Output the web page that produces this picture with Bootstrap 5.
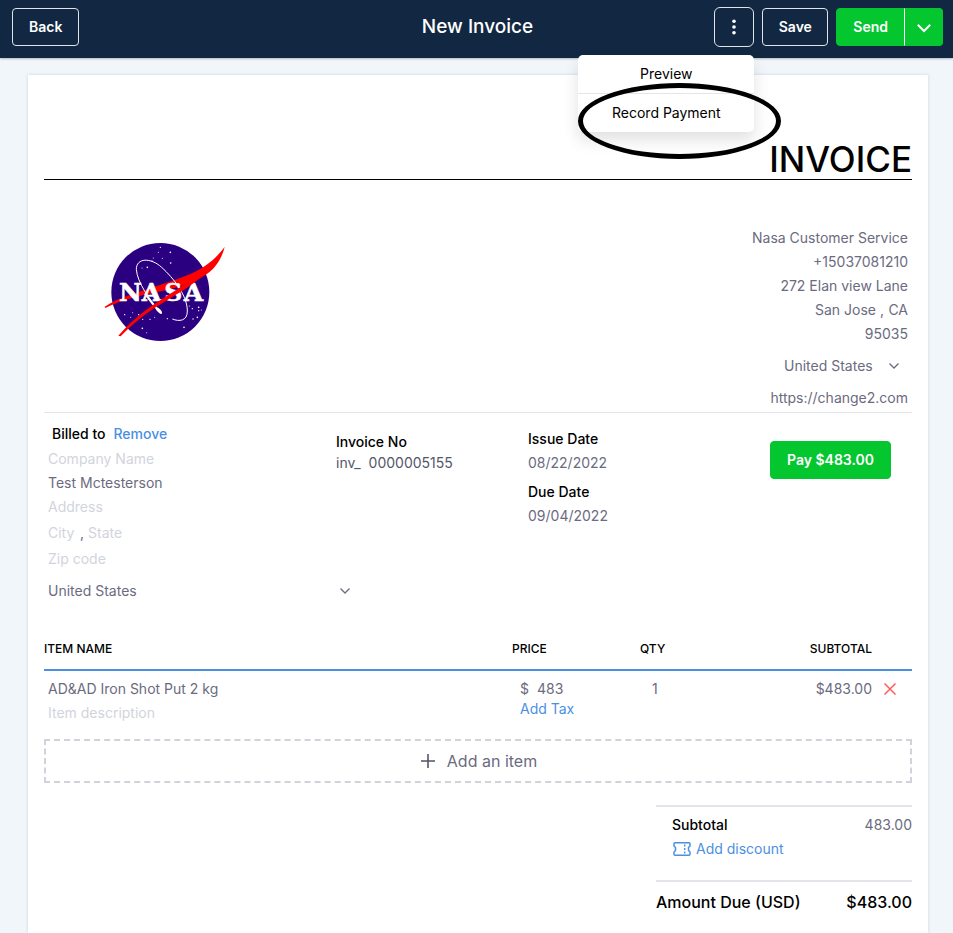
<!DOCTYPE html>
<html lang="en">
<head>
<meta charset="utf-8">
<meta name="viewport" content="width=device-width, initial-scale=1">
<title>New Invoice</title>
<link href="https://cdn.jsdelivr.net/npm/bootstrap@5.3.0/dist/css/bootstrap.min.css" rel="stylesheet">
<style>
  :root { --navy: #122842; --green: #04c62f; --blue: #4a90e2; --ink: #6b6b80; --faint: #d2d4dc; --rule: #e4e5ea; }
  body { font-family: Inter, "Liberation Sans", sans-serif; font-size: 14px; line-height: 24px; color: var(--ink); background: #f1f6fa; }
  a { color: var(--blue); text-decoration: none; }

  .topbar { background: var(--navy); padding: 7px 10px 11px 12px; display: grid; grid-template-columns: 1fr auto 1fr; box-shadow: 0 1px 2px rgba(0,0,0,.25); }
  .topbar-title { font-size: 19px; line-height: 40px; font-weight: 500; color: #fff; }
  .btn-bar { font-size: 14px; line-height: 24px; font-weight: 600; padding: 6px 16px; border-radius: 4px; color: #fff; border: 1px solid #dfe3e8; }
  .btn-bar:hover, .btn-bar.show { color: #fff; border-color: #dfe3e8; }
  .btn-kebab { width: 40px; height: 40px; padding: 0; border-radius: 6px; }
  .btn-go { background: var(--green); border-color: var(--green); }
  .btn-go:hover { background: #03b32a; border-color: #03b32a; }
  .btn-caret { width: 39px; padding: 0; border-left-color: #fff; }
  .btn-save { width: 66px; padding-left: 0; padding-right: 0; }

  .more-menu { top: 48px; right: 0; width: 176px; min-width: 0; padding: 0; border: 0; border-radius: 5px; box-shadow: 0 8px 16px rgba(0,0,0,.12); }
  .more-menu .dropdown-item { font-size: 14px; line-height: 22px; padding: 8px; text-align: center; color: #000; }
  .more-menu .divided { border-top: 1px solid var(--rule); }
  .callout-ring { position: absolute; left: 0; top: 28px; width: 203px; height: 76px; border: 5px solid #000; border-radius: 50%; pointer-events: none; }

  .page-wrap { padding: 17px 25px 0 28px; }
  .sheet { background: #fff; padding: 64px 16px 16px; box-shadow: 0 0 3px rgba(40,70,100,.2); }
  .sheet-title { font-size: 35px; line-height: 40px; font-weight: 500; color: #000; border-bottom: 1px solid #000; }

  .field { display: block; width: 100%; min-width: 0; height: 24px; padding: 0 4px; border: 0; background: transparent; color: var(--ink); font-size: 14px; line-height: 24px; }
  .field::placeholder { color: var(--faint); opacity: 1; }
  .pick { height: 40px; appearance: none; background: transparent url("data:image/svg+xml,%3Csvg xmlns='http://www.w3.org/2000/svg' width='12' height='8' fill='none' stroke='%236b6b80' stroke-width='1.3'%3E%3Cpath d='M1.5 1.5 6 6l4.5-4.5'/%3E%3C/svg%3E") no-repeat right 12px center; }
  .w-state { width: 28px; }
  .w-city { width: 36px; }
  .sender { width: 200px; }
  .sender-country { width: 132px; }

  .parties { padding-top: 46px; padding-bottom: 2px; border-bottom: 1px solid var(--rule); }
  .logo { margin: 4px 0 0 46px; }
  .details { display: grid; grid-template-columns: 292fr 192fr 384fr; padding-top: 9px; }
  .caption { color: #000; font-weight: 500; }
  .bill-head { padding: 0 8px 1px; font-weight: 500; }
  .city-line { padding: 2px 0; }
  .recipient { grid-column: 1 / 3; }
  .recipient .pick { width: 66%; }
  .invoice-no { padding-top: 9px; line-height: 21px; color: #54566a; }
  .dates { padding-top: 5px; }
  .dates dd { margin-bottom: 5px; }
  .btn-pay { margin: 19px 21px 0 0; }

  .items { table-layout: fixed; width: 100%; margin-top: 30px; }
  .items th { font-size: 12px; line-height: 16px; font-weight: 500; color: #000; padding: 0 0 12px; border-bottom: 2px solid var(--blue); }
  .items td { padding: 6px 0 14px; vertical-align: top; }
  .col-128 { width: 128px; }
  .col-104 { width: 104px; }
  .col-40 { width: 40px; }
  .qty { padding-left: 12px; }
  .tax { display: block; line-height: 16px; padding-left: 8px; }
  .remove-item { height: 24px; padding: 0 12px; border: 0; }
  .btn-add { border: 2px dashed #d0d3da; font-size: 16px; line-height: 24px; padding: 8px; color: var(--ink); border-radius: 0; }

  .totals { width: 256px; margin-top: 22px; }
  .totals-lines { border-top: 2px solid var(--rule); border-bottom: 2px solid var(--rule); padding: 6px 0 19px 16px; }
  .amount { font-size: 16px; font-weight: 500; color: #000; padding-top: 8px; }
</style>
</head>
<body class="d-flex flex-column min-vh-100">

<header class="topbar align-items-center">
  <div><button type="button" class="btn btn-bar">Back</button></div>
  <div class="topbar-title">New Invoice</div>
  <div class="d-flex justify-content-end align-items-center gap-2">
    <div class="dropdown">
      <button type="button" class="btn btn-bar btn-kebab d-flex align-items-center justify-content-center" aria-label="More actions" aria-expanded="true">
        <svg width="4" height="16" viewBox="0 0 4 16" fill="#fff" aria-hidden="true"><circle cx="2" cy="2.2" r="1.8"/><circle cx="2" cy="8" r="1.8"/><circle cx="2" cy="13.8" r="1.8"/></svg>
      </button>
      <ul class="dropdown-menu more-menu show">
        <li><a class="dropdown-item" href="#">Preview</a></li>
        <li class="divided"><a class="dropdown-item" href="#">Record Payment</a></li>
        <li class="callout-ring" aria-hidden="true"></li>
      </ul>
    </div>
    <button type="button" class="btn btn-bar btn-save">Save</button>
    <div class="btn-group">
      <button type="button" class="btn btn-bar btn-go">Send</button>
      <button type="button" class="btn btn-bar btn-go btn-caret" aria-label="Send options">
        <svg width="16" height="10" viewBox="0 0 16 10" fill="none" stroke="#fff" stroke-width="2" aria-hidden="true"><path d="M1.8 1.8 8 8l6.200-6.200"/></svg>
      </button>
    </div>
  </div>
</header>

<main class="page-wrap flex-grow-1 d-flex flex-column">
  <form class="sheet flex-grow-1">
    <h1 class="sheet-title text-end mb-0">INVOICE</h1>

    <section class="parties d-flex justify-content-between align-items-start">
      <svg class="logo" width="150" height="125" viewBox="0 0 450 375" role="img" aria-label="NASA">
        <circle cx="211" cy="186" r="147" fill="#2b0080"/>
        <g fill="#fff">
          <circle cx="211" cy="52" r="2"/><circle cx="241" cy="67" r="2.500"/><circle cx="205" cy="67" r="1.500"/><circle cx="217" cy="85" r="1.500"/><circle cx="242" cy="99" r="2.500"/><circle cx="190" cy="84" r="1.500"/><circle cx="172" cy="112" r="2.500"/><circle cx="156" cy="114" r="1.500"/><circle cx="186" cy="92" r="1.500"/>
          <circle cx="104" cy="254" r="2"/><circle cx="122" cy="262" r="1.500"/><circle cx="146" cy="254" r="2"/><circle cx="158" cy="268" r="2"/><circle cx="157" cy="295" r="2.500"/><circle cx="180" cy="268" r="2"/><circle cx="194" cy="262" r="1.500"/><circle cx="232" cy="266" r="2"/><circle cx="282" cy="292" r="2.500"/><circle cx="307" cy="236" r="2"/><circle cx="326" cy="232" r="2.500"/><circle cx="322" cy="262" r="2.500"/><circle cx="326" cy="242" r="2"/><circle cx="309" cy="267" r="2"/><circle cx="298" cy="228" r="1.500"/><circle cx="334" cy="240" r="1.500"/><circle cx="128" cy="248" r="1.500"/><circle cx="170" cy="308" r="1.500"/>
        </g>
        <path d="M44 230C85 203 140 189 210 165C290 138 350 122 404 51C391 101 364 127 328 146C270 174 240 176 170 193C115 206 85 216 46 234Z" fill="#f00"/>
        <path d="M210 245C178 208 142 158 139 118C139 83 182 82 215 112C250 144 292 196 292 243C292 274 267 275 247 267" fill="none" stroke="#fff" stroke-width="3"/>
        <path d="M165 190C180 212 192 226 204 240" fill="none" stroke="#fff" stroke-width="6"/>
        <ellipse cx="207" cy="242" rx="12" ry="5" transform="rotate(48 207 242)" fill="#fff"/>
        <text x="87" y="213" font-family="DejaVu Serif, serif" font-weight="700" font-size="75" fill="#fff" stroke="#fff" stroke-width="1.500"><tspan>N</tspan><tspan x="155">A</tspan><tspan x="223">S</tspan><tspan x="281">A</tspan></text>
        <path d="M85 317C135 258 195 220 250 185C290 159 330 139 352 121C322 158 272 186 224 215C172 245 132 277 92 319Z" fill="#f00"/>
      </svg>
      <div class="sender d-flex flex-column">
        <input class="field text-end" aria-label="Sender name" value="Nasa Customer Service">
        <input class="field text-end" aria-label="Sender phone" value="+15037081210">
        <input class="field text-end" aria-label="Sender address" value="272 Elan view Lane">
        <div class="d-flex">
          <input class="field text-end" aria-label="Sender city" value="San Jose"><span>,</span>
          <input class="field w-state flex-shrink-0 text-end" aria-label="Sender state" value="CA">
        </div>
        <input class="field text-end" aria-label="Sender zip code" value="95035">
        <select class="field pick sender-country align-self-end" aria-label="Sender country"><option>United States</option></select>
        <input class="field text-end" aria-label="Sender website" value="https://change2.com">
      </div>
    </section>

    <section class="details">
      <div>
        <div class="bill-head d-flex gap-2"><span class="caption">Billed to</span><a href="#">Remove</a></div>
        <input class="field" aria-label="Company name" placeholder="Company Name">
        <input class="field" aria-label="Customer name" value="Test Mctesterson">
        <input class="field" aria-label="Address" placeholder="Address">
        <div class="city-line d-flex align-items-center">
          <input class="field w-city" aria-label="City" placeholder="City"><span>,</span>
          <input class="field w-auto" aria-label="State" placeholder="State">
        </div>
        <input class="field" aria-label="Zip code" placeholder="Zip code">
      </div>
      <div class="invoice-no">
        <div class="caption">Invoice No</div>
        <div class="d-flex gap-2"><span>inv_</span><span>0000005155</span></div>
      </div>
      <div class="d-flex justify-content-between align-items-start">
        <dl class="dates mb-0">
          <dt class="caption">Issue Date</dt><dd>08/22/2022</dd>
          <dt class="caption">Due Date</dt><dd>09/04/2022</dd>
        </dl>
        <button type="button" class="btn btn-bar btn-go btn-pay">Pay $483.00</button>
      </div>
      <div class="recipient">
        <select class="field pick" aria-label="Customer country"><option>United States</option></select>
      </div>
    </section>

    <table class="items">
      <colgroup><col><col class="col-128"><col class="col-128"><col class="col-104"><col class="col-40"></colgroup>
      <thead><tr><th scope="col">ITEM NAME</th><th scope="col">PRICE</th><th scope="col">QTY</th><th scope="col" class="text-end">SUBTOTAL</th><th scope="col" aria-label="Actions"></th></tr></thead>
      <tbody>
        <tr>
          <td>
            <input class="field" aria-label="Item name" value="AD&amp;AD Iron Shot Put 2 kg">
            <input class="field" aria-label="Item description" placeholder="Item description">
          </td>
          <td>
            <div class="d-flex ps-2"><span>$</span><input class="field ps-2" aria-label="Price" value="483"></div>
            <a href="#" class="tax">Add Tax</a>
          </td>
          <td><input class="field qty" aria-label="Quantity" value="1"></td>
          <td class="text-end">$483.00</td>
          <td>
            <button type="button" class="btn remove-item d-flex align-items-center" aria-label="Remove item">
              <svg class="flex-shrink-0" width="12" height="12" viewBox="0 0 12 12" fill="none" stroke="#ff5c5c" stroke-width="1.500" aria-hidden="true"><path d="M.5.5l11 11M11.500.5l-11 11"/></svg>
            </button>
          </td>
        </tr>
      </tbody>
    </table>

    <button type="button" class="btn btn-add w-100 d-flex align-items-center justify-content-center">
      <svg class="me-2" width="20" height="14" viewBox="-2 0 20 14" fill="none" stroke="#54566a" stroke-width="1.600" aria-hidden="true"><path d="M7 0v14M0 7h14"/></svg>
      Add an item
    </button>

    <section class="totals ms-auto">
      <div class="totals-lines">
        <div class="d-flex justify-content-between"><span class="caption">Subtotal</span><span>483.00</span></div>
        <a href="#" class="d-flex align-items-center gap-1">
          <svg width="20" height="16" viewBox="0 0 20 16" fill="none" stroke="#4a90e2" stroke-width="1.500" aria-hidden="true"><path d="M3 1.700h14q1 0 1 1v2.300l-1.500 1.500v3l1.500 1.500v2.300q0 1-1 1h-14q-1 0-1-1v-2.300l1.500-1.500v-3l-1.500-1.500v-2.300q0-1 1-1z"/><path d="M12.700 3.500v2M12.700 7v2M12.700 10.500v2"/></svg>
          Add discount
        </a>
      </div>
      <div class="amount d-flex justify-content-between"><span>Amount Due (USD)</span><span>$483.00</span></div>
    </section>
  </form>
</main>

<script src="https://cdn.jsdelivr.net/npm/bootstrap@5.3.0/dist/js/bootstrap.bundle.min.js"></script>
</body>
</html>
